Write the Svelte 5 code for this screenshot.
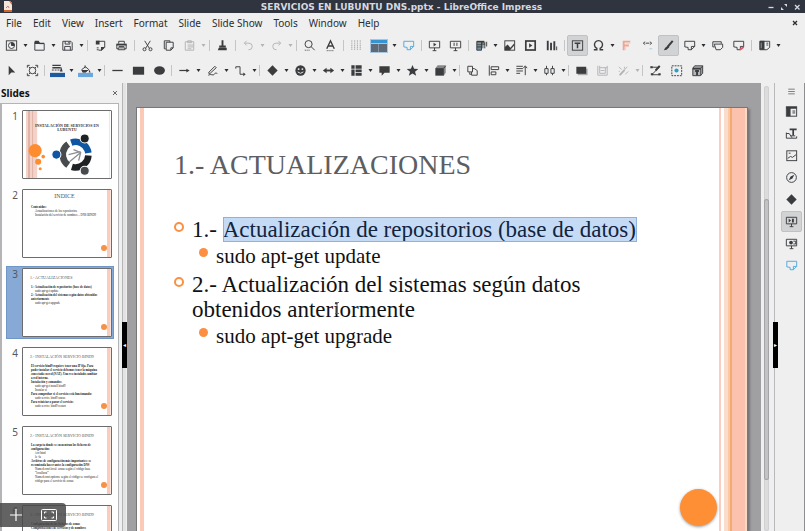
<script>
  const menus = ['File', 'Edit', 'View', 'Insert', 'Format', 'Slide', 'Slide Show', 'Tools', 'Window', 'Help'];

  const note = '<path d="M3 3.500h10.500V9L10 12.500H6.500V10L3 9.500z"/><path d="M13.500 9H10v3.500"/>';
  const screen = '<path d="M2.500 3.500h11v7h-11zM6 13.500h4M8 10.500v3"/>';

  const icons = {
    new: '<rect x="2.500" y="3" width="11" height="10"/><circle cx="8" cy="8" r="3.200"/><path d="M8 4.800v3.200h3.200"/><path class="f" d="M8 8V4.500A3.500 3.500 0 0 1 11.500 8z"/>',
    open: '<path d="M3 4v9h10V6H8"/><path class="f" d="M3 3h4l1.500 2H13v1.500H3z"/>',
    save: '<path d="M3 3.500h8.500l1.500 1.500v8H3zM5.500 3.500v3h5v-3M5 13V9h6v4"/><path d="M9 4.500v1"/>',
    export: '<path d="M3.500 3.500h9V10l-3 3H6"/><path class="f" d="M3 3h4v4H3zM12.500 9.500l-4 4v-4z"/><path d="M4 10.500h2M4 12.500h2"/>',
    print: '<path d="M5 6V3.500h6V6M4.500 12.500h7v-2h-7z"/><path class="f" d="M2.500 6h11v2h-11z"/><path d="M3 7v4.500h1.500M13 7v4.500h-1.500M5 9h6"/>',
    cut: '<path d="M5 3l5 8M11 3l-5 8"/><circle cx="4.800" cy="12" r="1.600"/><circle cx="11.200" cy="12" r="1.600"/>',
    copy: '<path d="M5 11.500H3.500V3h6v1.500"/><path d="M5.500 4.500h7.500v6l-2.500 2.500h-5zM13 10.500h-2.500v2.500"/>',
    paste: '<path d="M3.500 4h9v9h-9zM6 3h4v2H6zM6 7.500h6M6 9.500h6M6 11.500h4"/>',
    brush: '<path class="f" d="M7 2.500h2V8H7zM4.500 8h7v2h-7zM4 10.500h8.500V13H3z"/>',
    undo: '<path d="M6 3L3.500 5.500 6 8M4 5.500h4.500a3.500 3.500 0 0 1 0 7H8"/>',
    redo: '<path d="M10 3l2.500 2.500L10 8M12 5.500H7.500a3.500 3.500 0 0 0 0 7H8"/>',
    find: '<circle cx="7" cy="6.500" r="3.800"/><path d="M9.800 9.300l3.700 3.700"/><path d="M3 13h6" stroke-dasharray="1 1"/>',
    spell: '<path stroke-width="1.500" d="M4 11.500L8 3l4 8.500M5.500 8.500h5"/><path d="M4 13.500h8" stroke-dasharray="1 1"/>',
    grid: '<path d="M3 2.500v11M6 2.500v11M9 2.500v11M12 2.500v11" stroke-width="1.200" stroke-dasharray="1.500 .7"/>',
    comment: note,
    start: screen + '<path class="f" d="M7 5l3 2-3 2z"/>',
    startHere: screen + '<path d="M6.500 5v3.500M9.500 5v3.500"/>',
    table: '<path fill="#6d8fa5" stroke="none" d="M3 6h5v7H3z"/><path d="M3 3.500V13h5V3.500M3 6.500h9M3 9.500h5M9.500 4v7M11.500 4v7M13.500 4v5"/><path class="f" d="M3 3h8v2H3z"/>',
    image: '<rect x="3" y="3" width="10.500" height="10"/><path class="f" d="M3 13V9.500L6 7l3 3.500 4-5V8l-4.500 5z"/>',
    media: '<rect x="3" y="3.200" width="10" height="9.600" stroke-width="1.800"/><path class="f" d="M6.500 5.500L10 8l-3.500 2.500z"/>',
    chart: '<path stroke-width="2" d="M4 3v10M7.500 5v8M11 3.500v9.500"/><path d="M13.500 9v4"/>',
    textbox: '<rect x="2.500" y="3" width="11" height="10"/><path stroke-width="1.600" d="M5 5.500h6M8 5.500V11"/>',
    omega: '<path stroke-width="1.500" d="M3 12.500h3.200v-1.500a4.300 4.300 0 1 1 3.600 0v1.500H13"/>',
    fontwork: '<path stroke="#f0a58e" stroke-width="2" d="M5 13V3.800h7M5 8h5.500"/><path stroke="#f6cfc4" d="M7 13v-4M7.500 5.800H12"/>',
    link: '<path d="M5.500 4L3.500 5.500l2 1.500M10.500 4l2 1.500-2 1.500M6 5.500h4"/><path stroke="#9ccfe0" d="M10 11.500h3"/>',
    draw: '<path stroke-width="2.200" d="M12.500 3L7 9.500"/><path class="f" d="M7.500 8l1.500 1.500-3 3-3 .5 1.500-2.500z"/>',
    shapes: '<path d="M5 9.500H3V4h9v2"/><path d="M4.500 6.500h9V10l-2.500 2.500H6.500z"/>',
    redNote: note + '<path stroke="#e0576b" stroke-width="2" d="M9.500 12.500l4-3"/>',
    master: '<path d="M3 3.500h10.500V10l-3 2.500H3z"/><path class="f" d="M3 3h5v9.500H3z"/><path stroke="#9a9c9e" d="M4.500 5v6"/><path d="M10 5.500h2M10 7.500h2"/>',
    pointer: '<path class="f" d="M5 3v10l2.800-3H12z"/>',
    zoom: '<circle cx="8" cy="8" r="3.500"/><path d="M2.500 5V2.500H5M11 2.500h2.500V5M13.500 11v2.500H11M5 13.500H2.500V11M4 4l1.500 1.500M12 4l-1.500 1.500M4 12l1.500-1.500M12 12l-1.500-1.500"/>',
    lineColor: '<path d="M2.500 2.500h9M2.500 5h9" stroke-width="1.500"/><path d="M2 7.500h9" stroke-dasharray="2 1"/><path class="f" d="M12 4l1.500 5h-3z"/><path fill="#1d5b9d" stroke="none" d="M0 10.500h16v4.500H0z"/>',
    fillColor: '<path d="M7.500 2.500v3M4 7l4-3 3.500 3L8 9.500H5z"/><path class="f" d="M4 7.500h7L8 10H5zM12 7l1.500 3h-2z"/><path fill="#6ba7dc" stroke="none" d="M0 10.500h16v4.500H0z"/>',
    line: '<path stroke-width="1.400" d="M2.500 8h11"/>',
    rect: '<path class="f" d="M2 4h12v8.500H2z"/>',
    ellipse: '<ellipse class="f" cx="8" cy="8" rx="5.800" ry="4.500"/>',
    lineArrow: '<path stroke-width="1.300" d="M2.500 8H11"/><path class="f" d="M10 6l3.500 2-3.500 2z"/>',
    curve: '<path d="M4 10l6.500-6.500 1.500 1.500-6.500 6H4zM3.500 13c3-2 5 1 6.500-1s2-2 3-.5"/>',
    connector: '<path d="M3 4h4.500v8h4M3 4v2"/><path class="f" d="M11 10l2.500 2-2.500 2z"/>',
    diamond: '<path class="f" d="M8 2.500l5.500 5.500L8 13.500 2.500 8z"/>',
    smile: '<circle class="f" cx="8" cy="8" r="5.500"/><circle fill="#efeff0" stroke="none" cx="6" cy="6.500" r="1"/><circle fill="#efeff0" stroke="none" cx="10" cy="6.500" r="1"/><path stroke="#efeff0" d="M5 9.500q3 3 6 0"/>',
    doubleArrow: '<path stroke-width="2" d="M5 8h6"/><path class="f" d="M6 5v6L2 8zM10 5v6l4-3z"/>',
    flow: '<path class="f" d="M2.500 2.500H6V6H2.500zM7 2.500h6.500V6H7zM2.500 7H6v6.500H2.500zM7 7h6.500v2.500H7zM7 10.500h6.500v3H7z"/>',
    callout: '<path class="f" d="M2.500 3.500h11v7H8l-3 3v-3H2.500z"/>',
    star: '<path class="f" d="M8 2l1.700 4.200 4.500.2-3.500 2.900 1.200 4.300L8 11.200l-3.900 2.400 1.200-4.300-3.500-2.900 4.500-.2z"/>',
    cube: '<path fill="#888" stroke="none" d="M2.500 5.500l2.500-3h8.500v8l-2 3"/><path class="f" d="M2.500 5.500h9v8h-9z"/><path d="M13.500 3l-2 2.500"/>',
    rotate: '<path d="M3 3.500h5v6H3zM8.500 6H10l3 2v5H7V9.500"/><path d="M5 10v2h1.500"/>',
    align: '<path d="M3.500 2.500v11M5.500 4h8v3h-8zM5.500 9.500h5v3h-5z"/>',
    arrange: '<path d="M2.500 3.500h7M2.500 6h7M2.500 8.500h7M2.500 11h4M12 4v9M10 5.500L12 3l2 2.500"/>',
    distribute: '<path d="M3 6h3.500v5H3zM9.500 6H13v5H9.500zM4.800 3v3M4.800 11v2M11.200 3v3M11.200 11v2"/>',
    shadow: '<path fill="#aaa" stroke="none" d="M4 6h10.500v7H4z"/><path class="f" d="M2.500 4H13v7.500H2.500z"/>',
    crop: '<path d="M3 3v10h10M5 5h8M13 3v10M5 3v8h6V5M6 8h4"/>',
    filter: '<path d="M4 13l8-9M3 4l3 3M9 4v2M10 12l3-3M4 9H3"/><path stroke-width="2" d="M4 13l5-5.500"/>',
    points: '<path d="M3 4.500h9l-8 8h9"/><path stroke-width="2" d="M12.500 3L8 8"/><path class="f" d="M2.500 3.500h2.500v2H2.500zM3 11h2.500v2H3zM11 11h2.500v2H11z"/>',
    glue: '<rect x="3" y="3" width="10.500" height="10.500" stroke-dasharray="2 1"/><circle fill="#2f9dbd" stroke="none" cx="8" cy="8" r="2.200"/>',
    extrude: '<path fill="#b5b6b8" d="M3 5.500L5 3h8.500v8L11 13.500H3z"/><path class="f" d="M3 5h8.500V7H3z"/><path d="M13.500 3l-2 2.500v8"/><path stroke-width="2" d="M7.500 7.500V13M5.500 8.500h4"/>',
    hamburger: '<path d="M4.500 5.500h7M4.500 8h7M4.500 10.500h7"/>',
    properties: '<rect x="2.500" y="3" width="11" height="10"/><path class="f" d="M2.500 3h11v2h-11zM3 5h4v8H3z"/><path d="M9 7.500h3M9 9.500h3"/>',
    transition: '<path stroke-width="1.800" d="M6 3.500h7.500M9.800 3.500V10"/><path d="M2.500 7v6h11v-2M2.500 8h3l3 4.500M7 10.500h5"/>',
    gallery: '<rect x="3" y="3" width="10.500" height="10.500"/><path d="M4 11l3-2 2 1 4-3M5 5.500h2"/>',
    navigator: '<circle cx="8" cy="8" r="5.200"/><path class="f" d="M11 5L9 9l-4 2 2-4z"/>',
    masterPage: screen + '<path class="f" d="M5 5l2.500 2L5 9zM8.500 5h2v4h-2z"/>',
    animation: '<path d="M2.500 3.500h11v7h-11zM6 13.500h4M8 10.500v3"/><circle class="f" cx="7.500" cy="7" r="2"/><path d="M10 5.500h2.500v3H10"/>'
  };

  const S = { sep: true };
  const standard = [
    { i: 'new', t: 'New', d: 1 }, { i: 'open', t: 'Open', d: 1 }, { i: 'save', t: 'Save', d: 1 }, S,
    { i: 'export', t: 'Export as PDF' }, { i: 'print', t: 'Print' }, S,
    { i: 'cut', t: 'Cut' }, { i: 'copy', t: 'Copy' }, { i: 'paste', t: 'Paste', d: 1, off: 1 }, S,
    { i: 'brush', t: 'Clone formatting' }, S,
    { i: 'undo', t: 'Undo', d: 1, off: 1 }, { i: 'redo', t: 'Redo', d: 1, off: 1 }, S,
    { i: 'find', t: 'Find and replace' }, { i: 'spell', t: 'Spelling' }, S,
    { i: 'grid', t: 'Display grid', off: 1 }, { i: 'views', t: 'Display views', d: 1 }, { i: 'comment', t: 'Comment', blue: 1 }, S,
    { i: 'start', t: 'Start from first slide' }, { i: 'startHere', t: 'Start from current slide' }, S,
    { i: 'table', t: 'Table', d: 1 }, { i: 'image', t: 'Image' }, { i: 'media', t: 'Audio or video' }, { i: 'chart', t: 'Chart' }, S,
    { i: 'textbox', t: 'Text box', on: 1 }, { i: 'omega', t: 'Special character', d: 1 }, { i: 'fontwork', t: 'Fontwork' },
    { i: 'link', t: 'Hyperlink' }, { i: 'draw', t: 'Show draw functions', on: 1 }, { i: 'comment', t: 'New slide', d: 1 },
    { i: 'shapes', t: 'Duplicate slide' }, { i: 'redNote', t: 'Delete slide' }, S, { i: 'master', t: 'Slide layout', d: 1 }
  ];
  const drawing = [
    { i: 'pointer', t: 'Select' }, { i: 'zoom', t: 'Zoom and pan' }, S,
    { i: 'lineColor', t: 'Line color', d: 1 }, { i: 'fillColor', t: 'Fill color', d: 1 }, S,
    { i: 'line', t: 'Line' }, { i: 'rect', t: 'Rectangle' }, { i: 'ellipse', t: 'Ellipse' }, S,
    { i: 'lineArrow', t: 'Lines and arrows', d: 1 }, { i: 'curve', t: 'Curves', d: 1 }, { i: 'connector', t: 'Connectors', d: 1 }, S,
    { i: 'diamond', t: 'Basic shapes', d: 1 }, { i: 'smile', t: 'Symbol shapes', d: 1 }, { i: 'doubleArrow', t: 'Block arrows', d: 1 },
    { i: 'flow', t: 'Flowchart', d: 1 }, { i: 'callout', t: 'Callouts', d: 1 }, { i: 'star', t: 'Stars', d: 1 }, { i: 'cube', t: '3D objects', d: 1 }, S,
    { i: 'rotate', t: 'Rotate' }, { i: 'align', t: 'Align', d: 1 }, { i: 'arrange', t: 'Arrange', d: 1 }, { i: 'distribute', t: 'Distribute', d: 1 }, S,
    { i: 'shadow', t: 'Shadow' }, { i: 'crop', t: 'Crop', off: 1 }, { i: 'filter', t: 'Filter', d: 1, off: 1 }, S,
    { i: 'points', t: 'Points' }, { i: 'glue', t: 'Glue points' }, { i: 'extrude', t: 'Extrusion' }
  ];
  const deck = [
    { i: 'properties', t: 'Properties' }, { i: 'transition', t: 'Slide transition' }, { i: 'gallery', t: 'Gallery' },
    { i: 'navigator', t: 'Navigator' }, { i: 'diamond', t: 'Shapes' }, { i: 'masterPage', t: 'Master slides', on: 1 },
    { i: 'animation', t: 'Animation' }, { i: 'comment', t: 'Comments', blue: 1 }
  ];

  // Each line is [indent level, text]
  const slides = [
    { cover: true, title: 'INSTALACIÓN DE SERVICIOS EN LUBUNTU', lines: [] },
    { index: true, title: 'INDICE', lines: [[0, 'Contenidos:'], [1, 'Actualizaciones de los repositorios'], [1, 'Instalación del servicio de nombres – DNS BIND9']] },
    { title: '1.- ACTUALIZACIONES', lines: [[0, '1.- Actualización de repositorios (base de datos)'], [1, 'sudo apt-get update'], [0, '2.- Actualización del sistemas según datos obtenidos anteriormente'], [1, 'sudo apt-get upgrade']] },
    { title: '2.- INSTALACIÓN SERVICIO BIND9', lines: [[0, 'El servicio bind9 requiere tener una IP fija. Para poder instalar el servicio debemos tener la máquina conectada en red (NAT). Una vez instalado cambiar a red interna.'], [0, 'Instalación y comandos:'], [1, 'sudo apt-get install bind9'], [1, 'Instalar sí'], [0, 'Para comprobar si el servicio está funcionando:'], [1, 'sudo service bind9 status'], [0, 'Para reiniciar o parar el servicio:'], [1, 'sudo service bind9 restart']] },
    { title: '2.- INSTALACIÓN SERVICIO BIND9', lines: [[0, 'La carpeta donde se encuentran los ficheros de configuración:'], [1, '/etc/bind'], [1, 'ls -la'], [0, 'Archivos de configuración más importantes: se recomienda hacer antes la configuración DNS'], [1, 'Named.conf.local: zonas según el código base “localhost”'], [1, 'Named.conf.options: según el código se configura el código para el servicio de zonas']] },
    { title: '3.- INSTALACIÓN SERVICIO BIND9', lines: [[0, 'Configuración de los ficheros de zonas'], [0, 'Comprobaciones de servicios y de nombres']] }
  ];
  let current = $state(2);
</script>

{#snippet glyph(name)}
  {#if name === 'views'}
    <svg class="wide" viewBox="0 0 18 16" aria-hidden="true">
      <path fill="#a9c6de" d="M0 1h18v14H0z" /><path fill="#3794d3" d="M1 2h16v3H1z" /><path fill="#8792a0" d="M1 6h16v8H1z" /><path fill="#5f6a78" d="M1 6h7v8H1zM9 6h8v8H9z" />
    </svg>
  {:else}
    <svg viewBox="0 0 16 16" aria-hidden="true">{@html icons[name]}</svg>
  {/if}
{/snippet}

{#snippet toolbar(items, label, dense)}
  <div class="toolbar" class:dense role="toolbar" aria-label={label}>
    {#each items as item}
      {#if item.sep}
        <span class="sep"></span>
      {:else}
        <button class="tool" class:on={item.on} class:off={item.off} class:blue={item.blue} class:big={item.i === 'views'} aria-label={item.t}>
          {@render glyph(item.i)}
        </button>
        {#if item.d}
          <button class="drop" class:off={item.off} aria-label="{item.t} options">
            <svg viewBox="0 0 5 3" aria-hidden="true"><path class="f" d="M.5 0h4L2.500 3z" /></svg>
          </button>
        {/if}
      {/if}
    {/each}
  </div>
{/snippet}

<div class="window">
  <header class="titlebar">
    <svg class="appicon" viewBox="0 0 8 11" aria-hidden="true"><path fill="#f3e6dd" d="M0 0h6l2 2v9H0z" /><path fill="#d9632f" d="M6 0l2 2v2L5 0zM0 9h8v2H0z" /><path stroke="#b98570" d="M2 7l2-2 1 2" fill="none" /></svg>
    <h1>SERVICIOS EN LUBUNTU DNS.pptx - LibreOffice Impress</h1>
    <div class="controls">
      <button aria-label="Minimize"><svg viewBox="0 0 8 8"><path d="M1.500 4.500h5" /></svg></button>
      <button aria-label="Restore"><svg viewBox="0 0 8 8"><path fill="currentColor" stroke="none" d="M4 1h3v3zM1 4l3 3H1z" /></svg></button>
      <button aria-label="Close"><svg viewBox="0 0 8 8"><path d="M2 2l4.500 4.500M6.500 2L2 6.500" /></svg></button>
    </div>
  </header>

  <nav class="menubar">
    {#each menus as m}<button>{m}</button>{/each}
    <button class="closedoc" aria-label="Close document"><svg viewBox="0 0 8 8"><path d="M2 2l4 4M6 2L2 6" /></svg></button>
  </nav>

  {@render toolbar(standard, 'Standard', false)}
  {@render toolbar(drawing, 'Drawing', true)}

  <main>
    <aside class="panel">
      <div class="panelhead">
        <h2>Slides</h2>
        <button aria-label="Close panel"><svg viewBox="0 0 8 8"><path d="M2 2l4 4M6 2L2 6" /></svg></button>
      </div>
      <ol>
        {#each slides as s, n}
          <li class:selected={n === current}>
            <span class="num">{n + 1}</span>
            <button class="thumb" class:cover={s.cover} class:index={s.index} onclick={() => (current = n)}>
              {#if s.cover}
                <svg class="art" viewBox="0 0 87 66" aria-hidden="true">
                  <path fill="#f3d3c9" d="M3 0h11v66H3z" /><path fill="#dfb3a5" d="M5 0h2v66H5zM9 0h1v66H9z" /><path fill="#fae3db" d="M85 0h1v66h-1z" />
                  <g fill="#ff8c2e"><circle cx="12" cy="39" r="6.500" /><circle cx="15" cy="50" r="3" /><circle cx="20" cy="45" r="1.800" /><circle cx="17" cy="57" r="1.500" /></g>
                  <g fill="none" stroke-width="6.500">
                    <circle cx="52" cy="43" r="12.700" pathLength="360" stroke-dasharray="103 257" transform="rotate(-110 52 43)" stroke="#0f56a3" />
                    <circle cx="52" cy="43" r="12.700" pathLength="360" stroke-dasharray="103 257" transform="rotate(4 52 43)" stroke="#1f2224" />
                    <circle cx="52" cy="43" r="12.700" pathLength="360" stroke-dasharray="110 250" transform="rotate(125 52 43)" stroke="#474b4e" />
                  </g>
                  <g stroke="#fff"><circle cx="61" cy="27" r="4.500" fill="#1f2224" /><circle cx="33" cy="43" r="4.500" fill="#0f56a3" /><circle cx="61" cy="59" r="4.500" fill="#474b4e" /></g>
                  <path fill="none" stroke="#8b8f92" stroke-width="1.300" d="M46 50l11-9M45 43l12-3M50 38l7 3-2 8" />
                </svg>
              {/if}
              <span class="ttl">{s.title}</span>
              {#each s.lines as [level, text]}
                <span class="ln" class:sub={level === 1}>{text}</span>
              {/each}
              {#if !s.cover}<i class="dot"></i>{/if}
            </button>
          </li>
        {/each}
      </ol>
    </aside>

    <div class="splitter"><button class="grip" aria-label="Hide slide panel">◂</button></div>

    <section class="workspace">
      <article class="slide">
        <h3>1.- ACTUALIZACIONES</h3>
        <ul class="body">
          <li>
            <p>1.- <mark>Actualización de repositorios (base de datos)</mark></p>
            <ul><li>sudo apt-get update</li></ul>
          </li>
          <li>
            <p>2.- Actualización del sistemas según datos obtenidos anteriormente</p>
            <ul><li>sudo apt-get upgrade</li></ul>
          </li>
        </ul>
        <svg class="ibeam" viewBox="0 0 6 12" aria-hidden="true"><path d="M1 .5h1.500l.5.500.5-.500H5M3 1v10M1 11.500h1.500l.5-.500.5.500H5" /></svg>
        <i class="ball"></i>
      </article>
    </section>

    <div class="scroll"><div class="track"><div class="bar"></div></div></div>
    <div class="splitter right"><button class="grip" aria-label="Hide sidebar">▸</button></div>

    <nav class="sidebar" aria-label="Sidebar">
      <button class="tool small" aria-label="Sidebar settings">{@render glyph('hamburger')}</button>
      {#each deck as d}
        <button class="tool" class:on={d.on} class:blue={d.blue} aria-label={d.t}>{@render glyph(d.i)}</button>
      {/each}
    </nav>
  </main>

  <div class="overlay">
    <button aria-label="Add"><svg viewBox="0 0 16 16"><path d="M8 2v12M2 8h12" stroke-width="1.200" /></svg></button>
    <button aria-label="Full screen"><svg viewBox="0 0 16 16"><rect x=".5" y="2.500" width="15" height="11" rx="1" /><path d="M3.500 6.500v-1.500h2M10.500 5h2v1.500M12.500 9.500v1.500h-2M5.500 11h-2v-1.500" /></svg></button>
  </div>
</div>

<style>
  :global(body) { margin: 0; }
  .window {
    position: relative; display: flex; flex-direction: column; height: 100vh; overflow: hidden;
    background: #efeff0; color: #2b2d30; font-family: "Noto Sans", "Open Sans", sans-serif; font-size: 10px;
  }
  button { appearance: none; margin: 0; padding: 0; border: 0; background: none; color: inherit; font: inherit; }
  h1, h2, h3, p, ul, ol { margin: 0; padding: 0; font-weight: inherit; }
  ul, ol { list-style: none; }
  svg { display: block; fill: none; stroke: currentColor; }
  svg :global(.f) { fill: currentColor; stroke: none; }

  .titlebar { display: flex; align-items: center; flex: none; height: 13px; padding: 0 4px; background: #2f343f; color: #d5d9e0; }
  .titlebar h1 { flex: 1; padding-left: 24px; font: bold 9px/12px "DejaVu Sans", sans-serif; text-align: center; white-space: nowrap; }
  .appicon { width: 8px; height: 11px; stroke: none; }
  .controls { display: flex; gap: 5px; }
  .controls svg, .closedoc svg, .panelhead svg { width: 8px; height: 8px; stroke-width: 1.3; }
  .panelhead svg { stroke-width: 1; color: #66686b; }

  .menubar { display: flex; align-items: center; flex: none; gap: 11px; height: 20px; padding: 0 6px; font-size: 10px; line-height: 16px; }
  .closedoc { margin-left: auto; }

  .toolbar { display: flex; align-items: center; flex: none; height: 25px; padding-left: 1px; }
  .tool { display: grid; place-items: center; flex: none; width: 21px; height: 21px; border: 1px solid transparent; border-radius: 2px; box-sizing: border-box; color: #3a3c3e; }
  .tool svg { width: 15px; height: 15px; }
  .tool.big { width: 24px; }
  .tool svg.wide { width: 18px; height: 16px; stroke: none; }
  .tool.on { background: #d2d3d4; border-color: #c0c1c3; }
  .tool.blue { color: #4fa9dc; }
  .tool.off, .drop.off { color: #b2b3b5; }
  .drop { display: grid; place-items: center; flex: none; width: 7px; height: 20px; }
  .drop svg { width: 5px; height: 3px; }
  .sep { flex: none; width: 1px; height: 11px; margin: 0 2px; background: #c4c5c7; }
  .dense .sep { margin: 0 2px 0 1px; }

  main { display: flex; flex: 1; min-height: 0; }
  .panel { display: flex; flex-direction: column; flex: none; width: 119px; }
  .panelhead { display: flex; align-items: center; justify-content: space-between; flex: none; height: 20px; padding: 0 0 0 1px; }
  .panelhead h2 { font-size: 10px; font-weight: bold; line-height: 16px; color: #111; }
  .panel ol { flex: 1; min-height: 0; overflow: hidden; border: 1px solid #b4b4b6; border-width: 1px 1px 0 2px; background: #fefefe; padding-top: 4px; }
  .panel li { display: flex; gap: 3px; height: 73px; margin: 0 4px 6px; padding: 2px 2px 2px 0; box-sizing: border-box; }
  .panel li.selected { background: #86a9d5; outline: 1px solid #6f96c6; outline-offset: -1px; }
  .num { flex: none; width: 13px; padding-right: 1px; font-size: 10px; line-height: 12px; text-align: right; color: #55585c; box-sizing: border-box; }
  .thumb {
    position: relative; display: flex; flex-direction: column; flex: 1; min-width: 0; padding: 6px 12px 0 7px;
    border: 1px solid #6c6c6e; border-radius: 1px; overflow: hidden; text-align: left; color: #222;
    font: 3px/4px "Liberation Serif", serif; background: linear-gradient(to left, #fbe4db 0 1px, #f9cdbd 1px 4px, #fff 4px) #fff;
  }
  .ttl { margin-bottom: 5px; font-size: 4px; line-height: 5px; color: #555; white-space: nowrap; }
  .ln { padding-left: 1px; font-weight: bold; }
  .sub { padding-left: 5px; font-weight: normal; }
  .index .ttl { align-self: center; font-size: 6px; margin: -2px 0 6px; }
  .cover { background: #fff; }
  .cover .ttl { z-index: 1; width: 66px; margin: 7px 0 0 4px; font-size: 4px; line-height: 4px; font-weight: bold; text-align: center; white-space: normal; color: #333; }
  .art { position: absolute; inset: 0; width: 100%; height: 100%; stroke: none; }
  .dot { position: absolute; right: 4px; bottom: 6px; width: 6px; height: 6px; border-radius: 50%; background: #f59245; }

  .splitter { flex: none; display: flex; width: 8px; background: linear-gradient(to right, #efeff0 3px, #b5b5b7 3px 4px, #e3e3e4 4px 7px, #efeff0 7px); }
  .splitter.right { width: 9px; background: linear-gradient(to right, #efeff0 4px, #b9b9bb 4px 5px, #efeff0 5px); }
  .grip { width: 5px; height: 46px; margin: 239px 0 0 3px; background: #000; color: #fff; font: 6px/46px "DejaVu Sans", sans-serif; }

  .workspace { flex: 1; min-width: 0; overflow: hidden; padding: 25px 14px 0 10px; background: #a09fa2; }
  .slide {
    position: relative; aspect-ratio: 4 / 3; box-sizing: border-box; padding: 40px 100px 0 37px;
    color: #111; font-family: "Century Schoolbook", "C059", "Liberation Serif", serif;
    outline: 1px solid #777679; box-shadow: 2px 2px 2px 1px #767578;
    background:
      linear-gradient(to right, transparent 3px, #fcc9b9 3px 7px, transparent 7px),
      linear-gradient(to left, #f9d8c8 2px, #fbc2ae 2px 15px, #f3a970 15px 17px, #fbc9a8 17px 19px, #fadccd 19px 23px, #fff 23px 26px, #f9cdbf 26px 28px, #fff 28px);
  }
  .slide h3 { margin-bottom: 36px; font-size: 28px; line-height: 34px; color: #5d5e62; white-space: nowrap; }
  .body { font-size: 23px; line-height: 25px; }
  .body > li { position: relative; padding-left: 18px; margin-top: -1px; }
  .body > li + li { margin-top: 0; }
  .body > li::before { content: ""; position: absolute; left: 0; top: 5px; width: 6px; height: 6px; border: 2px solid #fb8f42; border-radius: 50%; }
  .body mark { display: inline-block; background: #c5dbf5; color: #10233f; outline: 1px solid #8fb2dc; outline-offset: -1px; border-right: 1px solid #333; white-space: nowrap; }
  .body ul { padding: 1px 0 3px; font-size: 21px; line-height: 26px; }
  .body ul li { position: relative; padding-left: 24px; }
  .body ul li::before { content: ""; position: absolute; left: 7px; top: 5px; width: 9px; height: 9px; border-radius: 50%; background: #fb8f42; }
  .ball { position: absolute; right: 30px; bottom: 40px; width: 37px; height: 37px; border-radius: 50%; background: #ff8f35; box-shadow: 0 1px 3px #999; }
  .ibeam { position: absolute; left: 197px; top: 194px; width: 6px; height: 12px; stroke: #666; stroke-width: 1; }

  .scroll { flex: none; display: flex; justify-content: center; width: 9px; padding: 3px 0 0 2px; box-sizing: border-box; }
  .track { display: flex; flex-direction: column; width: 5px; border-radius: 3px; background: #dcdcdd; box-shadow: inset 0 0 0 1px #d0d0d2; }
  .bar { width: 5px; height: 281px; margin-top: 113px; border-radius: 3px; background: #c3c3c5; box-shadow: inset 0 0 0 1px #a4a4a7; box-sizing: border-box; }
  .sidebar { display: flex; flex-direction: column; align-items: center; flex: none; gap: 1px; width: 25px; border-right: 1px solid #8f8f92; }
  .sidebar .small { height: 17px; color: #77797c; }

  .overlay { position: absolute; left: 0; bottom: 4px; display: flex; align-items: center; gap: 17px; height: 24px; padding: 0 9px 0 8px; border-radius: 0 4px 4px 0; background: rgba(72, 72, 72, .85); color: #fff; }
  .overlay svg { width: 16px; height: 16px; }
</style>
